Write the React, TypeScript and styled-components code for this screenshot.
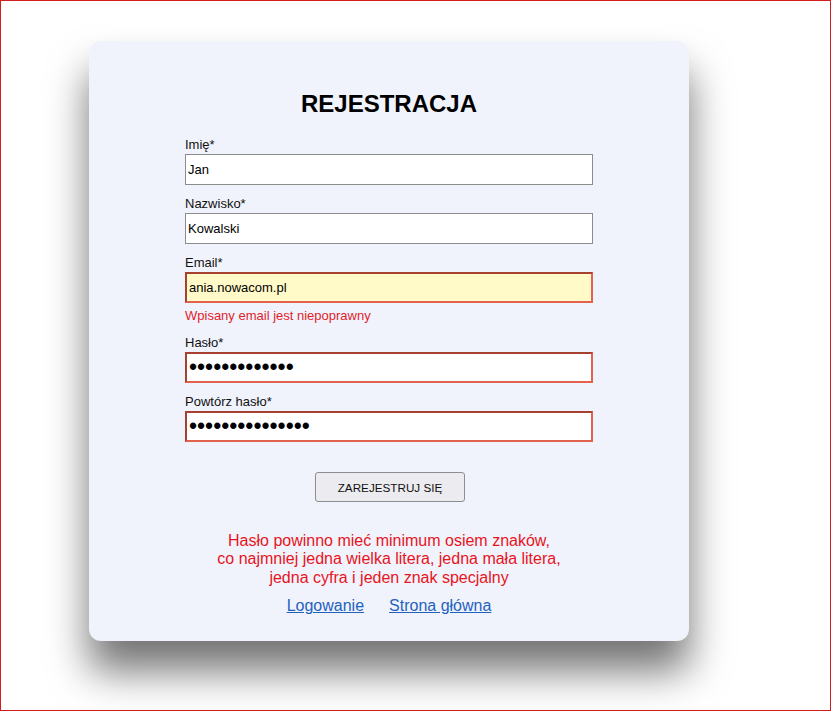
import React from "react";
import styled, { createGlobalStyle } from "styled-components";

const GlobalStyle = createGlobalStyle`
  html, body {
    margin: 0;
    padding: 0;
    background: #ffffff;
  }
  body {
    font-family: "Liberation Sans", Arial, sans-serif;
  }
  * { box-sizing: border-box; }
`;

const Frame = styled.div`
  width: 831px;
  height: 711px;
  border: 1px solid #d41c1c;
  padding: 40px 0 0 88px;
  background: #ffffff;
`;

const Card = styled.form`
  width: 600px;
  height: 600px;
  background: #f0f3fc;
  border-radius: 12px;
  box-shadow: 0 30px 40px rgba(0, 0, 0, 0.55);
  padding: 49px 96px 0;
  display: flex;
  flex-direction: column;
`;

const Title = styled.h1`
  margin: 0 0 19px;
  font-size: 24px;
  line-height: 28px;
  font-weight: bold;
  text-align: center;
  color: #000;
`;

const Field = styled.div`
  display: flex;
  flex-direction: column;
  gap: 1px;
  margin-bottom: 11px;
`;

const Label = styled.label`
  font-size: 13px;
  line-height: 16px;
  color: #111;
`;

const Input = styled.input<{ $invalid?: boolean; $warn?: boolean; $secret?: boolean }>`
  width: 408px;
  height: 31px;
  margin: 0;
  padding: 0 2px;
  font-family: "Liberation Sans", Arial, sans-serif;
  font-size: ${(p) => (p.$secret ? "23px" : "13px")};
  color: #000;
  background: ${(p) => (p.$warn ? "#fffac8" : "#ffffff")};
  border-radius: 0;
  outline: none;
  border-style: solid;
  border-width: ${(p) => (p.$invalid ? "2px" : "1px")};
  border-color: ${(p) =>
    p.$invalid ? "#a6402f #e2624e #e2624e #a6402f" : "#8c8c8c"};
`;

const ErrorText = styled.div`
  margin-top: 4px;
  font-size: 13px;
  line-height: 16px;
  color: #e01e2a;
`;

const ButtonRow = styled.div`
  display: flex;
  justify-content: center;
  margin-top: 19px;
`;

const SubmitButton = styled.button`
  width: 150px;
  height: 30px;
  margin-left: 2px;
  background: #ececf0;
  border: 1px solid #8e8e8e;
  border-radius: 3px;
  font-family: "Liberation Sans", Arial, sans-serif;
  font-size: 11.7px;
  color: #111;
  padding: 0;
`;

const Message = styled.p`
  margin: 30px 0 0;
  font-size: 16px;
  line-height: 18.4px;
  text-align: center;
  color: #e8141c;
`;

const Links = styled.div`
  display: flex;
  justify-content: center;
  gap: 25px;
  margin-top: 10px;
  font-size: 16px;
  line-height: 18.4px;
`;

const NavLink = styled.a`
  color: #1f62be;
  text-decoration: underline;
`;

export default function App() {
  return (
    <>
      <GlobalStyle />
      <Frame>
        <Card onSubmit={(e) => e.preventDefault()}>
          <Title>REJESTRACJA</Title>
          <Field>
            <Label htmlFor="imie">Imię*</Label>
            <Input id="imie" type="text" defaultValue="Jan" />
          </Field>
          <Field>
            <Label htmlFor="nazwisko">Nazwisko*</Label>
            <Input id="nazwisko" type="text" defaultValue="Kowalski" />
          </Field>
          <Field>
            <Label htmlFor="email">Email*</Label>
            <Input id="email" type="text" defaultValue="ania.nowacom.pl" $invalid $warn />
            <ErrorText>Wpisany email jest niepoprawny</ErrorText>
          </Field>
          <Field>
            <Label htmlFor="haslo">Hasło*</Label>
            <Input id="haslo" type="password" defaultValue="Abcdefgh1234!" $invalid $secret />
          </Field>
          <Field>
            <Label htmlFor="haslo2">Powtórz hasło*</Label>
            <Input id="haslo2" type="password" defaultValue="Abcdefgh12345!!" $invalid $secret />
          </Field>
          <ButtonRow>
            <SubmitButton type="submit">ZAREJESTRUJ SIĘ</SubmitButton>
          </ButtonRow>
          <Message>
            Hasło powinno mieć minimum osiem znaków,
            <br />
            co najmniej jedna wielka litera, jedna mała litera,
            <br />
            jedna cyfra i jeden znak specjalny
          </Message>
          <Links>
            <NavLink href="#">Logowanie</NavLink>
            <NavLink href="#">Strona główna</NavLink>
          </Links>
        </Card>
      </Frame>
    </>
  );
}
